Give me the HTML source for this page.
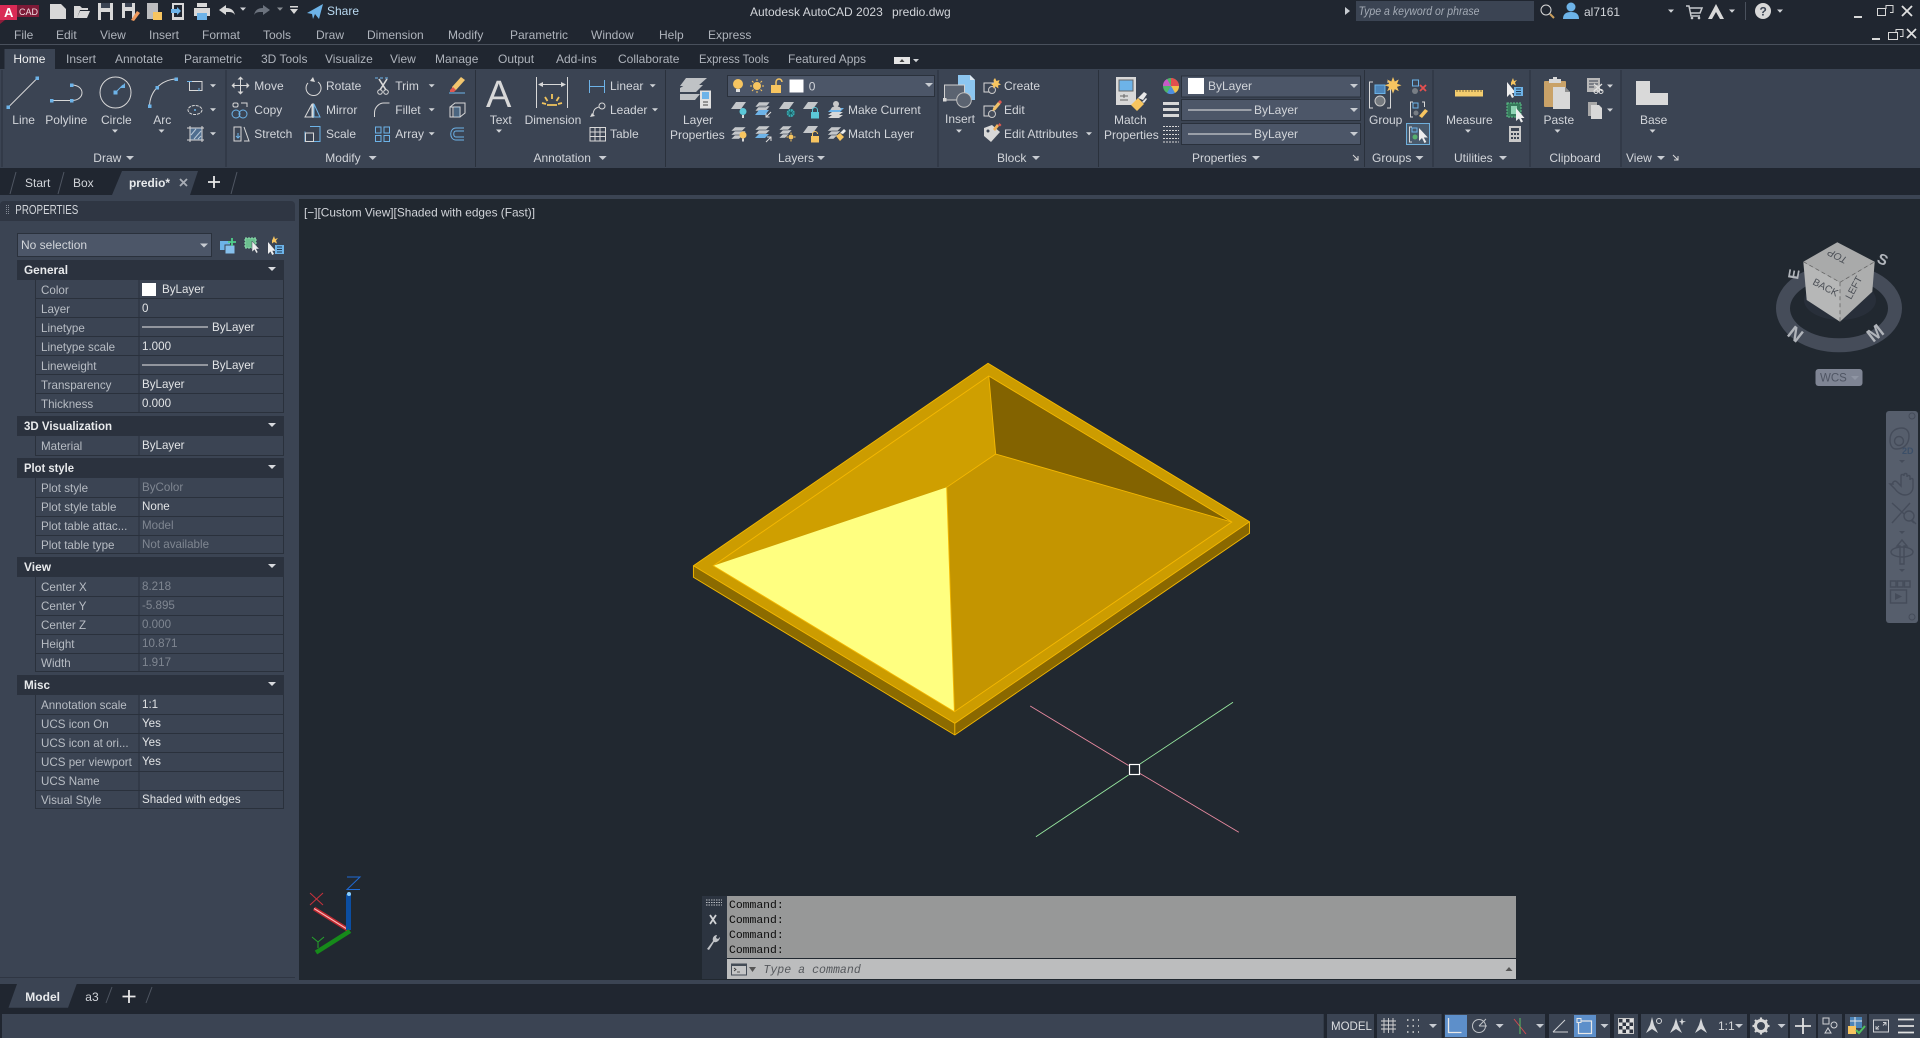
<!DOCTYPE html>
<html><head><meta charset="utf-8"><title>Autodesk AutoCAD 2023 predio.dwg</title>
<style>
html,body{margin:0;padding:0;background:#212830;width:1920px;height:1038px;overflow:hidden}
svg{display:block;font-family:"Liberation Sans",sans-serif;font-size:12px}
.t{fill:#d2d5da}.m{fill:#afb4bc}.l{fill:#b8bdc4;font-size:11.6px}.v{fill:#e2e4e6;font-size:11.6px}.d{fill:#7f8691;font-size:11.6px}
.h{fill:#e8eaec;font-weight:bold}
.c{font-family:"Liberation Mono",monospace;font-size:11.4px;fill:#0c0c0c}
.s{fill:none;stroke:#d8d8d8;stroke-width:1}.b{fill:#6db3e8}.g{fill:#d8d8d8}.y{fill:#f7c560}
.bs{fill:none;stroke:#6db3e8;stroke-width:1}
.n{fill:none;stroke:#454c5a;stroke-width:1.4}
</style></head><body>
<svg width="1920" height="1038" viewBox="0 0 1920 1038" xmlns="http://www.w3.org/2000/svg">
<defs><path id="tr" d="M-3-1.5h6l-3 3.2z" fill="#d0d3d7"/><path id="trb" d="M-4-2h8l-4 4z" fill="#c8ccd2"/></defs>
<!-- base -->
<rect width="1920" height="69" fill="#202630"/>
<rect y="44" width="1920" height="1" fill="#49505c"/>
<rect y="69" width="1920" height="99" fill="#3b4453"/>
<rect y="168" width="1920" height="27" fill="#202630"/>
<rect y="195" width="1920" height="4" fill="#3b4453"/>
<rect x="299" y="199" width="1621" height="781" fill="#212830"/>
<rect y="199" width="299" height="781" fill="#3b4453"/>
<rect y="980" width="1920" height="4" fill="#3b4453"/>
<rect y="984" width="1920" height="54" fill="#202630"/>
<rect x="2" y="1014" width="1918" height="24" fill="#3b4453"/>

<!-- title bar -->
<rect x="0" y="5" width="17" height="15" fill="#d92a55"/><path d="M0 20h5l-5 4z" fill="#8e1c3a"/>
<rect x="17" y="5" width="22" height="12" fill="#7d1a37"/>
<text x="4" y="17" fill="#fff" font-weight="bold" font-size="13">A</text>
<text x="19" y="15" fill="#f2dfe4" font-size="9">CAD</text>
<!-- QAT -->
<path d="M50 4h11l5 5v10H50z" class="g"/>
<path d="M74 18V6h6l2 2h6v2h-8l-3 8zM77 18l3-7h10l-3 7z" class="g"/>
<path d="M98 3h15v17H98z" class="g"/><rect x="101" y="3" width="9" height="5" fill="#3b4453"/><rect x="101" y="12" width="9" height="8" fill="#202630"/>
<path d="M122 3h13v15h-13z" class="g"/><rect x="125" y="3" width="7" height="4" fill="#3b4453"/><rect x="125" y="11" width="7" height="7" fill="#202630"/><path d="M131 20l6-9 3 2-6 8z" fill="#f09a5c"/>
<path d="M147 3h11v16h-11z" class="g" opacity=".85"/><rect x="153" y="12" width="9" height="8" class="y"/>
<path d="M172 3h12v17h-12z" class="g"/><rect x="174" y="5" width="8" height="12" fill="#202630"/><path d="M171 9h6v-2l4 4-4 4v-2h-6z" class="b"/>
<rect x="197" y="3" width="10" height="4" class="g"/><rect x="194" y="8" width="16" height="8" class="g"/><rect x="197" y="13" width="10" height="7" class="b"/>
<path d="M219 10l7-5v3c6 0 8 3 9 7-2-3-4-3-9-3v3z" class="g"/>
<use href="#tr" x="243" y="9"/>
<path d="M270 10l-7-5v3c-6 0-8 3-9 7 2-3 4-3 9-3v3z" fill="#6b727d"/>
<use href="#tr" x="280" y="9" opacity=".6"/>
<path d="M290 6h8v1.5h-8z M290 9h8l-4 5z" class="g"/>
<path d="M307 13l16-9-4 15-4-5-2 5-1-5z" class="b"/>
<text x="327" y="15" fill="#b9d9f1">Share</text>
<text x="750" y="16" class="t">Autodesk AutoCAD 2023</text>
<text x="892" y="16" class="t">predio.dwg</text>
<path d="M1345 7l5 4-5 4z" fill="#c8ccd2"/>
<rect x="1356" y="1" width="178" height="20" fill="#3b4453"/>
<text x="1358.5" y="15" fill="#a4abb6" font-style="italic" font-size="11.5" textLength="121" lengthAdjust="spacingAndGlyphs">Type a keyword or phrase</text>
<circle cx="1546" cy="10" r="5" fill="none" stroke="#d8d8d8"/><path d="M1550 14l4 4" stroke="#c99e5c" stroke-width="2"/>
<circle cx="1571" cy="7" r="4.5" class="b"/><path d="M1563 19c0-5 3-7 8-7s8 2 8 7z" class="b"/>
<text x="1584" y="16" class="t">al7161</text><use href="#tr" x="1671" y="11"/>
<path d="M1686 6h3l2 10h9M1690 8h12l-2 5h-9" fill="none" stroke="#c6c9cd" stroke-width="1.5"/><circle cx="1692" cy="18" r="1.3" fill="#c6c9cd"/><circle cx="1699" cy="18" r="1.3" fill="#c6c9cd"/>
<path d="M1716 4l8 15h-4l-4-7-4 7h-4z" class="g"/><use href="#tr" x="1732" y="11"/>
<rect x="1745" y="2" width="1" height="18" fill="#4a515d"/>
<circle cx="1763" cy="11" r="8" class="g"/><text x="1759.5" y="15.5" fill="#3b4453" font-weight="bold">?</text><use href="#tr" x="1780" y="11"/>
<rect x="1854" y="16" width="8" height="2" class="g"/>
<path d="M1878 8.500h8v-3h7v7h-3M1877.500 8.500h8v7h-8z" class="s" stroke-width="1.4"/>
<path d="M1902 6l10 10M1912 6l-10 10" stroke="#e0e0e0" stroke-width="1.8"/>

<!-- menu -->
<g class="m">
<text x="14" y="39">File</text><text x="56" y="39">Edit</text><text x="100" y="39">View</text><text x="149" y="39">Insert</text><text x="202" y="39">Format</text><text x="263" y="39">Tools</text><text x="316" y="39">Draw</text><text x="367" y="39">Dimension</text><text x="448" y="39">Modify</text><text x="510" y="39">Parametric</text><text x="591" y="39">Window</text><text x="659" y="39">Help</text><text x="708" y="39">Express</text>
</g>
<rect x="1872" y="38" width="8" height="2" class="g"/><path d="M1889 32.500h7v-3h7v7h-3M1888.500 32.500h9v7h-9z" class="s" stroke-width="1.3"/><path d="M1907 29l9 9M1916 29l-9 9" stroke="#e0e0e0" stroke-width="1.7"/>

<!-- tabs -->
<rect x="4.500" y="49" width="50.500" height="20" fill="#3b4453"/>
<text x="13.400" y="63" fill="#f0f1f2">Home</text>
<g class="m">
<text x="66" y="63">Insert</text><text x="115" y="63">Annotate</text><text x="184" y="63">Parametric</text><text x="261" y="63">3D Tools</text><text x="325" y="63">Visualize</text><text x="390" y="63">View</text><text x="435" y="63">Manage</text><text x="498" y="63">Output</text><text x="556" y="63">Add-ins</text><text x="618" y="63">Collaborate</text><text x="699" y="63" textLength="70" lengthAdjust="spacingAndGlyphs">Express Tools</text><text x="788" y="63">Featured Apps</text>
</g>
<rect x="894" y="57" width="16" height="7" fill="#e4e4e4"/><path d="M899.500 62l2.500-3 2.500 3z" fill="#444"/><use href="#tr" x="916" y="60.500"/>

<!-- ribbon separators -->
<g fill="#2a313c">
<rect x="1.500" y="70" width="1" height="97"/><rect x="225.500" y="70" width="1" height="97"/><rect x="475" y="70" width="1" height="97"/><rect x="665" y="70" width="1" height="97"/><rect x="937.500" y="70" width="1" height="97"/><rect x="1098" y="70" width="1" height="97"/><rect x="1364" y="70" width="1" height="97"/><rect x="1432.500" y="70" width="1" height="97"/><rect x="1529.500" y="70" width="1" height="97"/><rect x="1620.500" y="70" width="1" height="97"/>
</g>

<!-- Draw -->
<path d="M8.500 107L37 78.500" class="s"/><rect x="6.500" y="105.500" width="3.500" height="3.500" class="b"/><rect x="35.500" y="76.500" width="3.500" height="3.500" class="b"/>
<path d="M52 100.500h19.500M71.500 85c14 0 14 15.500 0 15.500" class="s" stroke-width="1.2"/><rect x="50" y="99" width="3.500" height="3.500" class="b"/><rect x="70" y="99" width="3.500" height="3.500" class="b"/><rect x="70" y="83.500" width="3.500" height="3.500" class="b"/>
<circle cx="115.500" cy="92.500" r="15.500" class="s" stroke-width="1.2"/><path d="M115.500 92.500L123 85" stroke="#6db3e8"/><path d="M125 83v5h-5z" class="b"/><rect x="113.500" y="90.500" width="4" height="4" class="b"/>
<path d="M149.500 106C150 92 160 80 176 79" class="s" stroke-width="1.2"/><rect x="148" y="104.500" width="3.500" height="3.500" class="b"/><rect x="155.500" y="86" width="3.500" height="3.500" class="b"/><rect x="174.500" y="77.500" width="3.500" height="3.500" class="b"/>
<path d="M189.500 81.500h12.500v9h-12.500z" class="s"/><path d="M187 81.500h5M199 91v-3" class="bs"/>
<ellipse cx="195" cy="110" rx="7" ry="4.500" class="s" stroke-dasharray="3 1"/><circle cx="195" cy="110" r="1" class="b"/>
<path d="M190 128h12v12h-12z" fill="#4f6e90" stroke="#d8d8d8"/><path d="M191 135l5-6M194 139l7-8M198 139l3-3" stroke="#b8c8d8"/><path d="M187 128h17M187 140h17M190 126v16M202 126v16" class="s" stroke-width=".8"/>
<use href="#tr" x="213" y="85.700"/><use href="#tr" x="213" y="109.700"/><use href="#tr" x="213" y="133.700"/><use href="#tr" x="115" y="131"/><use href="#tr" x="161.500" y="131"/>
<g class="t">
<text x="12.300" y="124">Line</text><text x="45.300" y="124">Polyline</text><text x="101" y="124">Circle</text><text x="153.300" y="124">Arc</text>
<text x="93.300" y="162">Draw</text>
<text x="254.300" y="90">Move</text><text x="254.300" y="114">Copy</text><text x="254.300" y="138">Stretch</text>
<text x="326" y="90">Rotate</text><text x="326" y="114">Mirror</text><text x="326" y="138">Scale</text>
<text x="395.300" y="90">Trim</text><text x="395.300" y="114">Fillet</text><text x="395.300" y="138">Array</text>
<text x="325.300" y="162">Modify</text>
<text x="489.700" y="124">Text</text><text x="524.600" y="124">Dimension</text>
<text x="610" y="90">Linear</text><text x="610" y="114">Leader</text><text x="610" y="138">Table</text>
<text x="533.500" y="162">Annotation</text>
<text x="683" y="124">Layer</text><text x="670" y="139">Properties</text>
<text x="848" y="114">Make Current</text><text x="848" y="138">Match Layer</text><text x="778" y="162">Layers</text>
<text x="945" y="123">Insert</text><text x="1004" y="90">Create</text><text x="1004" y="114">Edit</text><text x="1004" y="138">Edit Attributes</text><text x="997" y="162">Block</text>
<text x="1114" y="124">Match</text><text x="1104" y="139">Properties</text><text x="1192" y="162">Properties</text>
<text x="1369" y="124">Group</text><text x="1372" y="162">Groups</text>
<text x="1446" y="124">Measure</text><text x="1454" y="162">Utilities</text>
<text x="1543.500" y="124">Paste</text><text x="1549.400" y="162">Clipboard</text>
<text x="1640" y="124">Base</text><text x="1626" y="162">View</text>
</g>
<use href="#trb" x="130" y="158"/><use href="#trb" x="372.700" y="158"/><use href="#trb" x="602.700" y="158"/><use href="#trb" x="821" y="158"/><use href="#trb" x="1036" y="158"/><use href="#trb" x="1256" y="158"/><use href="#trb" x="1419.500" y="158"/><use href="#trb" x="1503" y="158"/><use href="#trb" x="1661" y="158"/>
<path d="M1353 155l5 5M1358 156v4h-4" class="s" stroke-width=".8"/><path d="M1673 155l5 5M1678 156v4h-4" class="s" stroke-width=".8"/>

<!-- Modify icons -->
<path d="M240.500 78v15M233 85.500h15" class="s" stroke-width="1.5"/><path d="M240.500 76.500l3 3h-6zM240.500 94.500l3-3h-6zM231.500 85.500l3-3v6zM249.500 85.500l-3-3v6z" class="g"/>
<circle cx="236" cy="114" r="4" class="bs"/><circle cx="243" cy="114" r="4" class="bs"/><rect x="233" y="103" width="5" height="4" class="s" rx="1.500"/><path d="M241 103h6v4" class="s"/>
<path d="M234 127h7v14h-7zM244 127l5 14h-5" class="s"/><path d="M238 133v5M236 136l2 2 2-2" class="bs"/>
<path d="M318 82a7.500 7.500 0 1 1-10 1" class="s" stroke-width="1.2"/><path d="M313 77l-3 4 5 1z" class="g"/>
<path d="M312 104v13h-7z" class="s"/><path d="M314 104v13h6z" class="bs"/><path d="M313 103v15" class="s" stroke-width=".7"/>
<path d="M310 126.500h10v15h-15v-10" class="bs"/><path d="M305.500 133h8v8.500h-8z" class="s"/>
<path d="M375 78h3M380 78h3M385 78h3" stroke="#6db3e8"/><path d="M379 79l7 11M387 79l-7 11" stroke="#d8d8d8" stroke-width="1.6"/><circle cx="380" cy="92" r="2.300" class="s"/><circle cx="386" cy="92" r="2.300" class="s"/>
<path d="M374.500 117v-4c0-6 5-10 9-10h6" class="s"/>
<path d="M375.500 127h5.500v6h-5.500zM384 127h5.500v6H384zM375.500 135.500h5.500v6h-5.500zM384 135.500h5.500v6H384z" class="bs"/>
<use href="#tr" x="431.700" y="85.700"/><use href="#tr" x="431.700" y="109.700"/><use href="#tr" x="431.700" y="133.700"/>
<path d="M452 87l9-10 4 3-9 10-4 1z" fill="#f2c66e"/><path d="M450 90l3-3 3 3-2 2h-4z" fill="#e0584f"/><path d="M449 93h16" class="bs"/>
<path d="M450 107h10v10h-10zM450 107l5-4h10v10l-5 4M453 107v10" class="s"/><rect x="454" y="107" width="6" height="10" fill="#6db3e8" opacity=".3"/>
<path d="M464 128h-8c-7 0-7 12 0 12h8M464 131h-8c-3 0-3 6 0 6h8" class="bs" stroke-width="1.200"/>

<!-- Annotation -->
<text x="486" y="107" class="g" font-size="38" font-weight="normal">A</text><use href="#tr" x="499" y="131"/>
<path d="M536.500 77v31M567.500 77v31M539 84.500h26" class="s"/><path d="M538 84.500l5-2.500v5zM566 84.500l-5-2.500v5z" class="g"/>
<path d="M552 94v5M545 97l2.500 4M559 97l-2.500 4M542 103l4 1M562 103l-4 1M547 105h10" stroke="#f2c55e" stroke-width="1.800" fill="none"/>
<path d="M589.500 80v13M604.500 80v13M590 86.500h14" class="bs"/>
<circle cx="602" cy="106" r="3" class="s"/><path d="M599 107c-4 1-6 3-6 9" class="s"/><path d="M590 117l5-1-3-3z" class="g"/>
<path d="M590 127.500h15.500v13.500H590zM590 132h15.500M590 136.500h15.500M595 127.500V141M600 127.500V141" class="s"/>
<use href="#tr" x="652.700" y="85.700"/><use href="#tr" x="655" y="109.700"/>

<!-- Layers -->
<path d="M686 78h21l-9 8h-18zM680 88l5-3h18l-7 7h-16zM680 94h20l-5 6h-15z" fill="#bfc2c5"/>
<rect x="700" y="90.500" width="11" height="18" fill="#e0e0e0"/><rect x="702" y="92" width="7" height="7" class="b"/><path d="M703 102h5M703 105h5" stroke="#444"/>
<rect x="727.500" y="75.500" width="207" height="21" fill="#4c5668" stroke="#2a313c"/>
<circle cx="738" cy="84" r="5" class="y"/><rect x="736" y="89" width="4" height="3" fill="#e0e0e0"/>
<circle cx="757" cy="86" r="4" class="y"/><path d="M757 79v2M757 91v2M750 86h2M762 86h2M752 81l1.500 1.500M762 81l-1.500 1.500M752 91l1.500-1.500M762 91l-1.500-1.500" stroke="#f7c560"/>
<rect x="771" y="85" width="10" height="8" class="y"/><path d="M776 85v-3a3 3 0 0 1 6 0" fill="none" stroke="#f7c560" stroke-width="1.500"/>
<rect x="789.500" y="79.500" width="14" height="13" fill="#fff"/>
<text x="808.700" y="90.500" class="t">0</text><use href="#trb" x="929" y="85"/>
<!-- row 2 -->
<path d="M731 109l5-7h10l-5 7z" fill="#c4c7ca"/><circle cx="743" cy="111.500" r="3.500" fill="#5bc8d8"/><rect x="742" y="115" width="2" height="3" fill="#d8d8d8"/>
<path d="M755 107l4-5h11l-4 5zM755 111l4-5h11l-4 5z" fill="#c4c7ca" stroke="#3b4453" stroke-width=".5"/><path d="M755 115l4-5h10l-4 5z" class="b"/><path d="M771 112l-5 5M766 113.500v3.500h3.500" stroke="#ddd" fill="none"/>
<path d="M779 109l5-7h10l-5 7z" fill="#c4c7ca"/><circle cx="790.700" cy="113" r="4" fill="#3ab0b8"/><path d="M786 113h9.500M790.700 108.500v9M787.500 110l6.500 6M794 110l-6.500 6" stroke="#1f5a60" stroke-width=".7"/>
<path d="M803 109l5-7h10l-5 7z" fill="#c4c7ca"/><rect x="811" y="112" width="8" height="6.500" fill="#5bc8d8"/><path d="M812.500 112v-2a2.500 2.500 0 0 1 5 0v2" fill="none" stroke="#5bc8d8"/>
<path d="M828 112l4-4h12l-4 4z" class="b"/><path d="M828 115l4-3h11l-4 3zM828 118l4-3h11l-4 3z" fill="#d8d8d8"/><circle cx="836" cy="104" r="3" fill="#c8c8c8"/><path d="M831 110c0-3 2-3.500 5-3.500s5 .5 5 3.500z" fill="#c8c8c8"/>
<!-- row 3 -->
<path d="M731 131l4-4h11l-4 4zM731 135l4-4h11l-4 4zM731 139l4-4h8l-4 4z" fill="#c4c7ca" stroke="#3b4453" stroke-width=".4"/><circle cx="743" cy="135" r="3.500" class="y"/><rect x="742" y="138.500" width="2" height="3" fill="#d8d8d8"/>
<path d="M755 130l4-4h11l-4 4zM755 134l4-4h11l-4 4z" fill="#c4c7ca" stroke="#3b4453" stroke-width=".4"/><path d="M755 138l4-4h10l-4 4z" class="b"/><path d="M766 142l5-5M767 137h4v4" stroke="#ddd" fill="none"/>
<path d="M779 130l4-4h9l-4 4zM779 134l4-4h9l-4 4zM779 138l4-4h6l-4 4z" fill="#c4c7ca" stroke="#3b4453" stroke-width=".4"/><circle cx="791" cy="137" r="2.500" class="y"/><path d="M791 132.500v1.500M791 140v1.500M786.500 137h1.500M794 137h1.500" stroke="#f7c560"/>
<path d="M803 133l5-7h10l-5 7z" fill="#c4c7ca"/><rect x="811" y="136" width="8" height="6.500" class="y"/><path d="M812.500 136v-2a2.500 2.500 0 0 1 5 0" fill="none" stroke="#f7c560"/>
<path d="M827.500 131l4-4h10l-4 4zM827.500 135l4-4h9l-4 4zM827.500 139l4-4h6l-4 4z" fill="#c4c7ca" stroke="#3b4453" stroke-width=".4"/><path d="M836 136l4 5 4-4-4-4z" class="y"/><path d="M840 133l4-4 2 2-3 3z" fill="#eee"/>

<!-- Block -->
<path d="M958 75h12l5 5v20h-17z" fill="#8cc6f0"/><path d="M970 75l5 5h-5z" fill="#e0eaf2"/>
<rect x="944.500" y="85" width="20" height="15" fill="#5b6370" stroke="#d0d0d0"/><circle cx="964" cy="100" r="7.300" fill="#5b6370" stroke="#c0c0c0"/><rect x="943" y="98" width="3.500" height="3.500" class="g"/>
<use href="#tr" x="959" y="131"/>
<path d="M984 83h10v9h-10z" class="s"/><circle cx="992" cy="90" r="3.500" fill="#444c5a" stroke="#c8c8c8"/><path d="M995 78l1.500 3 3-1-1 3 2.500 1.500-3 1 .5 3-3-2-2 2-.5-3-2-1.500 3-1-.5-3z" class="y"/>
<path d="M984 106h10v10h-10z" class="s"/><circle cx="992" cy="114" r="3.500" fill="#444c5a" stroke="#c8c8c8"/><path d="M993 108l5-6 2.500 2-5 6-3 1z" fill="#f0c06a"/><path d="M998 102l2-2 2 2-1.500 2z" fill="#e0584f"/>
<path d="M984 128l8-3 8 7-9 10-7-6z" class="g"/><circle cx="988" cy="131" r="1.500" fill="#3b4453"/><path d="M993 129l4-5 2 2-4 5z" fill="#f0b05a"/><path d="M998 125l1.500-2 2 2-1.500 1.500z" fill="#e0584f"/>
<use href="#tr" x="1089" y="133.700"/>

<!-- Match props -->
<rect x="1116" y="77" width="20" height="28" fill="#d8d8d8"/><rect x="1119" y="80" width="14" height="11" class="b" stroke="#666"/><path d="M1120 96h8M1120 100h8M1124 94v4" stroke="#666"/>
<path d="M1131 105l7-7 6 6-7 7z" class="y"/><path d="M1138 98l6-6 3 2-4 6z" fill="#e8e8e8"/><path d="M1142 102l4-4 1 1-3 4z" fill="#e8e8e8"/>
<circle cx="1171" cy="86" r="8" fill="#4eb56a"/><path d="M1171 86v-8a8 8 0 0 1 8 8z" fill="#e24f4f"/><path d="M1171 86h8a8 8 0 0 1-4 7z" fill="#f2c24d"/><path d="M1171 86l-4 7a8 8 0 0 0 8 0z" fill="#4f8ee0"/><path d="M1171 86l-8 0a8 8 0 0 1 4-7l4 7z" fill="#c85ac8"/>
<path d="M1163 102h16v3h-16zM1163 108h16v3h-16zM1163 114h16v3h-16z" class="g"/>
<path d="M1163 126.500h16M1163 130.500h16M1163 134.500h16M1163 138.500h16M1163 142h16" stroke="#d8d8d8" stroke-dasharray="2 1"/>
<rect x="1181.500" y="76" width="179" height="21" fill="#4c5668" stroke="#2a313c"/>
<rect x="1181.500" y="99.500" width="179" height="21" fill="#4c5668" stroke="#2a313c"/>
<rect x="1181.500" y="123.500" width="179" height="21" fill="#4c5668" stroke="#2a313c"/>
<rect x="1188" y="78" width="16" height="16" fill="#fff"/><text x="1208" y="90" class="t">ByLayer</text>
<path d="M1188 110h63.500M1188 134h63.500" stroke="#e8e8e8"/><text x="1254" y="114" class="t">ByLayer</text><text x="1254" y="138" class="t">ByLayer</text>
<use href="#trb" x="1354" y="86"/><use href="#trb" x="1354" y="110"/><use href="#trb" x="1354" y="134"/>

<!-- Groups -->
<path d="M1373 82h-3.500v26h3.500M1387 82h3.500v26h-3.500" class="s" stroke-width="1.300"/>
<rect x="1375" y="85" width="10" height="8.500" fill="#4c84b8" stroke="#6db3e8"/><circle cx="1380" cy="101" r="5" fill="#74797f" stroke="#c8c8c8"/>
<path d="M1393 77l1.800 4.500 4-2-1.800 4.200 4.500 1.500-4.500 1.700 1.800 4.200-4-2-1.800 4.500-1.700-4.500-4.200 2 2-4.200-4.500-1.700 4.500-1.500-2-4.200 4.200 2z" class="y"/>
<rect x="1412.500" y="80" width="6" height="6" fill="none" stroke="#6db3e8"/><circle cx="1415" cy="91" r="3" fill="#787e85"/><path d="M1420 85l6 6M1426 85l-6 6" stroke="#e55050" stroke-width="1.800"/>
<path d="M1413 102h-2.500v15h2.500M1422 102h2.500v5" class="s"/><rect x="1413" y="103" width="5" height="5" class="bs"/><circle cx="1416" cy="113" r="2.500" fill="#787e85"/><path d="M1419 116l6-7 3 2-6 7z" class="y"/>
<rect x="1406.500" y="123.500" width="23" height="21" fill="#495a6c" stroke="#6fb0dc"/>
<path d="M1412 127h-2.500v15h2.500" class="s"/><rect x="1412" y="128" width="5" height="4" fill="none" stroke="#6db3e8"/><circle cx="1415" cy="137" r="2.500" fill="#57b06f"/><path d="M1419 128v13l3-3 2.500 5 1.800-1-2.500-4.500h4z" fill="#eee"/>

<!-- Utilities -->
<rect x="1455" y="90" width="28" height="6.500" fill="#f4cd6e"/><path d="M1457 90v2M1460 90v2M1463 90v2M1466 90v2M1469 90v2M1472 90v2M1475 90v2M1478 90v2M1481 90v2" stroke="#7a6838"/>
<path d="M1507 82v15l3-3 2 4 2-1-2-4h4z" fill="#eee"/><rect x="1514" y="87" width="9" height="9" class="b"/><path d="M1516 89h5M1516 91.500h5M1516 94h5" stroke="#1f3a52"/><path d="M1513 78l1 3 3-1-2 2.500 1 3-3-1.500-2 1.500v-3z" class="y"/>
<rect x="1507" y="103" width="14" height="14" fill="#377a5c" stroke="#5cc48a" stroke-dasharray="2 1"/><rect x="1511" y="106" width="6" height="8" fill="#8fd4b4"/><path d="M1516 108v13l3-2.500 2 4 2-1-2-3.500h3.500z" fill="#eee"/>
<rect x="1509" y="126" width="12" height="16" fill="#c8c8c8"/><rect x="1511" y="128" width="8" height="3" fill="#3b4453"/><path d="M1511 133h2v2h-2zM1514 133h2v2h-2zM1517 133h2v2h-2zM1511 137h2v2h-2zM1514 137h2v2h-2zM1517 137h2v2h-2z" fill="#3b4453"/>
<use href="#tr" x="1468" y="131"/>

<!-- Clipboard -->
<rect x="1544" y="81" width="22" height="26" fill="#c9a268" rx="1"/><rect x="1549" y="79" width="12" height="4" class="g"/><rect x="1553" y="77" width="4" height="3" class="g"/>
<path d="M1553 87h12l5 5v17h-17z" class="g"/><path d="M1565 87l5 5h-5z" fill="#8f8f8f"/>
<use href="#tr" x="1557.500" y="131"/>
<rect x="1587" y="78" width="13" height="14" fill="#b8b8b8"/><path d="M1589 81h9M1589 84h9M1589 87h5" stroke="#3b4453"/><path d="M1594 84l8 7M1602 84l-8 7" stroke="#e0e0e0" stroke-width="1.300"/><circle cx="1596" cy="91.500" r="2" fill="none" stroke="#e0e0e0"/><circle cx="1601" cy="91.500" r="2" fill="none" stroke="#e0e0e0"/>
<path d="M1588 102h9v14h-9z" fill="#a8a8a8"/><path d="M1591 105h8l3 3v11h-11z" class="g"/><use href="#tr" x="1610" y="86"/><use href="#tr" x="1610" y="110"/>

<!-- View -->
<path d="M1636 81h14v12h18v12h-32z" fill="#d9d9d9"/><use href="#tr" x="1652.500" y="131"/>

<!-- doc tabs -->
<path d="M112 195l10-24h76l-8 24z" fill="#3b4453"/>
<path d="M10 194l6-22M58 194l6-22M231 194l6-22" stroke="#4f5662"/>
<text x="25" y="187" class="t">Start</text><text x="73" y="187" class="t">Box</text>
<text x="129" y="187" fill="#e8eaec" font-weight="bold" textLength="41" lengthAdjust="spacingAndGlyphs">predio*</text>
<path d="M180 179l7 7M187 179l-7 7" stroke="#a8adb5" stroke-width="1.800"/>
<path d="M214 176v12M208 182h12" stroke="#e8e8e8" stroke-width="1.800"/>

<!-- properties panel -->
<path d="M0 221v-16a4 4 0 0 1 4-4h287a4 4 0 0 1 4 4v16z" fill="#2f3643"/>
<path d="M6.500 205v10M8.500 205v10" stroke="#838a95" stroke-dasharray="1 1"/>
<text x="15.300" y="214" fill="#d2d5da" font-size="13" textLength="63" lengthAdjust="spacingAndGlyphs">PROPERTIES</text>
<rect x="17.500" y="233.500" width="194" height="23" fill="#4c5668" stroke="#2a313c"/>
<text x="21" y="249" class="t">No selection</text><use href="#trb" x="204" y="245.500"/>
<rect x="220" y="241" width="10" height="9" class="b"/><rect x="225" y="245" width="10" height="9" fill="#86c0ec" stroke="#3b4453"/><path d="M232 238v8M228 242h8" stroke="#4fd08a" stroke-width="1.800"/>
<rect x="245" y="238" width="11" height="10" fill="#6cc090" stroke="#8fe0b0" stroke-dasharray="2 1"/><path d="M252 241v11l2.500-2.300 1.700 3.500 1.800-.9-1.700-3.300h3z" fill="#eee" stroke="#3b4453" stroke-width=".5"/>
<path d="M268 242v12l2.500-2.500 1.700 3.500 1.800-1-1.700-3.300h3.200z" fill="#eee"/><rect x="275" y="245" width="9" height="9" class="b"/><path d="M277 247h5M277 249.500h5M277 252h5" stroke="#1f3a52"/><path d="M274 236l1 3 3-1-2 2.500 1 3-3-1.500-2 1.500v-3z" class="y"/>

<g fill="#2b323e">
<rect x="17" y="260" width="267" height="20"/><rect x="17" y="416" width="267" height="20"/><rect x="17" y="458" width="267" height="20"/><rect x="17" y="557" width="267" height="20"/><rect x="17" y="675" width="267" height="20"/>
</g>
<g fill="#2a313c">
<rect x="35" y="280" width="1" height="133"/><rect x="138.500" y="280" width="1" height="133"/><rect x="283" y="280" width="1" height="133"/>
<rect x="35" y="436" width="1" height="19"/><rect x="138.500" y="436" width="1" height="19"/><rect x="283" y="436" width="1" height="19"/>
<rect x="35" y="478" width="1" height="76"/><rect x="138.500" y="478" width="1" height="76"/><rect x="283" y="478" width="1" height="76"/>
<rect x="35" y="577" width="1" height="95"/><rect x="138.500" y="577" width="1" height="95"/><rect x="283" y="577" width="1" height="95"/>
<rect x="35" y="695" width="1" height="114"/><rect x="138.500" y="695" width="1" height="114"/><rect x="283" y="695" width="1" height="114"/>
<rect x="35" y="298" width="249" height="1"/><rect x="35" y="317" width="249" height="1"/><rect x="35" y="336" width="249" height="1"/><rect x="35" y="355" width="249" height="1"/><rect x="35" y="374" width="249" height="1"/><rect x="35" y="393" width="249" height="1"/><rect x="35" y="412" width="249" height="1"/><rect x="35" y="455" width="249" height="1"/>
<rect x="35" y="497" width="249" height="1"/><rect x="35" y="516" width="249" height="1"/><rect x="35" y="535" width="249" height="1"/><rect x="35" y="553" width="249" height="1"/>
<rect x="35" y="596" width="249" height="1"/><rect x="35" y="615" width="249" height="1"/><rect x="35" y="634" width="249" height="1"/><rect x="35" y="653" width="249" height="1"/><rect x="35" y="671" width="249" height="1"/>
<rect x="35" y="714" width="249" height="1"/><rect x="35" y="733" width="249" height="1"/><rect x="35" y="752" width="249" height="1"/><rect x="35" y="771" width="249" height="1"/><rect x="35" y="790" width="249" height="1"/><rect x="35" y="808" width="249" height="1"/>
</g>
<rect x="0" y="977" width="295" height="1" fill="#2f3643"/>
<text x="24" y="274" class="h" textLength="44" lengthAdjust="spacingAndGlyphs">General</text><text x="24" y="430" class="h" textLength="88" lengthAdjust="spacingAndGlyphs">3D Visualization</text><text x="24" y="472" class="h" textLength="50" lengthAdjust="spacingAndGlyphs">Plot style</text><text x="24" y="571" class="h" textLength="27" lengthAdjust="spacingAndGlyphs">View</text><text x="24" y="689" class="h" textLength="26" lengthAdjust="spacingAndGlyphs">Misc</text>
<path d="M268 267h8l-4 4zM268 423h8l-4 4zM268 465h8l-4 4zM268 564h8l-4 4zM268 682h8l-4 4z" fill="#d8dade"/>
<rect x="142" y="283" width="14" height="13" fill="#fff"/>
<path d="M142 327h66M142 365h66" stroke="#e8e8e8"/>
<g class="l">
<text x="41" y="294">Color</text><text x="41" y="313">Layer</text><text x="41" y="332">Linetype</text><text x="41" y="351">Linetype scale</text><text x="41" y="370">Lineweight</text><text x="41" y="389">Transparency</text><text x="41" y="408">Thickness</text>
<text x="41" y="450">Material</text>
<text x="41" y="492">Plot style</text><text x="41" y="511">Plot style table</text><text x="41" y="530">Plot table attac...</text><text x="41" y="549">Plot table type</text>
<text x="41" y="591">Center X</text><text x="41" y="610">Center Y</text><text x="41" y="629">Center Z</text><text x="41" y="648">Height</text><text x="41" y="667">Width</text>
<text x="41" y="709">Annotation scale</text><text x="41" y="728">UCS icon On</text><text x="41" y="747">UCS icon at ori...</text><text x="41" y="766">UCS per viewport</text><text x="41" y="785">UCS Name</text><text x="41" y="804">Visual Style</text>
</g>
<g class="v">
<text x="162" y="293">ByLayer</text><text x="142" y="312">0</text><text x="212" y="331">ByLayer</text><text x="142" y="350">1.000</text><text x="212" y="369">ByLayer</text><text x="142" y="388">ByLayer</text><text x="142" y="407">0.000</text>
<text x="142" y="449">ByLayer</text><text x="142" y="510">None</text>
<text x="142" y="708">1:1</text><text x="142" y="727">Yes</text><text x="142" y="746">Yes</text><text x="142" y="765">Yes</text><text x="142" y="803">Shaded with edges</text>
</g>
<g class="d">
<text x="142" y="491">ByColor</text><text x="142" y="529">Model</text><text x="142" y="548">Not available</text>
<text x="142" y="590">8.218</text><text x="142" y="609">-5.895</text><text x="142" y="628">0.000</text><text x="142" y="647">10.871</text><text x="142" y="666">1.917</text>
</g>

<!-- viewport label -->
<text x="304" y="216.500" fill="#d2d5da" textLength="231" lengthAdjust="spacingAndGlyphs">[−][Custom View][Shaded with edges (Fast)]</text>

<!-- model -->
<g stroke-linejoin="miter">
<path d="M693.400 565.700L954.800 723.300V735L693.400 577.300z" fill="#8c6b00"/>
<path d="M1249.500 521.700L954.800 723.300V735L1249.500 533.300z" fill="#8a6800"/>
<path d="M988 363.300L1249.500 521.700 954.800 723.300 693.400 565.700z" fill="#cc9c00"/>
<path d="M988.800 376L713.300 565.700 946.700 487.300 995.700 454z" fill="#cf9f00"/>
<path d="M988.800 376L1231.800 522 995.700 454z" fill="#836300"/>
<path d="M995.700 454L1231.800 522 954.400 711.700 946.700 487.300z" fill="#c49500"/>
<path d="M946.700 487.300L713.300 565.700 954.400 711.700z" fill="#ffff80"/>
<g fill="none" stroke="#f5b800" stroke-width=".9">
<path d="M988 363.300L1249.500 521.700V533.300L954.800 735 693.400 577.300V565.700z"/>
<path d="M693.400 565.700L954.800 723.300 1249.500 521.700M954.800 723.300V735"/>
<path d="M988.800 376L1231.800 522 954.400 711.700 713.300 565.700z"/>
<path d="M988.800 376L995.700 454 1231.800 522M995.700 454L946.700 487.300 954.400 711.700"/>
</g>
</g>
<path d="M1030.200 706L1128.500 765.500M1140 773.500L1238.800 832.300" stroke="#e88aa0" stroke-width=".9"/>
<path d="M1233 702.300L1140 764M1128.500 775L1035.900 836.700" stroke="#98e8a0" stroke-width=".9"/>
<rect x="1129.500" y="764.500" width="10" height="10" fill="none" stroke="#fff" stroke-width="1.200"/>

<!-- UCS -->
<path d="M348.500 930L314 908.500" stroke="#c02830" stroke-width="4"/><path d="M348.500 930L314 908.500" stroke="#ffb4b4" stroke-width="1.200"/>
<path d="M348.500 930V894" stroke="#0b4ea2" stroke-width="5"/><circle cx="349" cy="894" r="2" fill="#8cd0ff"/>
<path d="M350 931L316 952.500" stroke="#168a1a" stroke-width="4.500"/>
<path d="M310 893l13 12M323 893l-13 12" stroke="#c8323c"/>
<path d="M347 877h13l-13 12.500h13" fill="none" stroke="#1f6ad4"/>
<path d="M312 937l6 5 6-5M318 942v6" fill="none" stroke="#26a52c"/>

<!-- view cube -->
<ellipse cx="1839" cy="308.300" rx="56" ry="37" fill="none" stroke="#454c59" stroke-width="14"/>
<ellipse cx="1840" cy="300" rx="36" ry="20" fill="#282f3a"/>
<text transform="translate(1876,262) rotate(25)" fill="#b0b4ba" font-size="15" font-weight="bold">S</text>
<text transform="translate(1798,280) rotate(-80)" fill="#b0b4ba" font-size="15" font-weight="bold">E</text>
<path d="M1837.300 242.300L1874.700 261.700 1840 282.300 1803.300 261.700z" fill="#a9aaaa"/>
<path d="M1803.300 261.700L1840 282.300V321.700L1806.700 300z" fill="#b6b7b7"/>
<path d="M1874.700 261.700L1840 282.300V321.700L1872.300 291.700z" fill="#adaeae"/>
<path d="M1803.300 261.700L1840 282.300 1874.700 261.700M1840 282.300V321.700" fill="none" stroke="#666" stroke-dasharray="4 3" stroke-width=".8"/>
<text transform="translate(1848,258) rotate(207)" fill="#4a4e55" font-size="10" font-style="italic">TOP</text>
<text transform="translate(1812,284) rotate(28)" fill="#4a4e55" font-size="10">BACK</text>
<text transform="translate(1851,300) rotate(-62)" fill="#4a4e55" font-size="10">LEFT</text>
<text transform="translate(1786,335) rotate(38)" fill="#b0b4ba" font-size="19" font-weight="bold">N</text>
<text transform="translate(1873,343) rotate(-38)" fill="#b0b4ba" font-size="19" font-weight="bold">M</text>
<rect x="1815.500" y="369" width="47" height="17" rx="3" fill="#7f8594"/>
<text x="1820" y="381.500" fill="#4f5563" font-size="11.500">WCS</text><path d="M1851 376h8l-4 4z" fill="#8f95a3"/>

<!-- nav bar -->
<rect x="1886" y="411" width="32" height="212" rx="3" fill="#565e6c"/>
<circle cx="1912" cy="416" r="3" fill="none" stroke="#454c5a"/><circle cx="1912" cy="617" r="3" fill="none" stroke="#454c5a"/>
<path d="M1890 440c0-8 5-12 12-12 4 0 7 3 7 8 0 8-5 13-13 13-4 0-6-4-6-9z" class="n"/><circle cx="1899" cy="441" r="4.500" class="n"/>
<text x="1902" y="454" fill="#3c4f68" font-size="9" font-weight="bold">2D</text>
<path d="M1899 460h6l-3 3z" fill="#454c5a"/>
<path d="M1890 484l5 5c2 3 6 6 10 6s8-3 8-8v-7c0-2-3-2-3 0v-3c0-2-3-2-3 0v-2c0-2-3-2-3 0v1c0-2-3-2-3 0v10l-4-4c-2-2-5 0-4 2z" class="n"/>
<path d="M1892 503l22 20M1910 503l-18 20" class="n"/><circle cx="1909" cy="516" r="5" fill="#565e6c" stroke="#454c5a" stroke-width="1.400"/><path d="M1912 520l4 4" class="n"/>
<path d="M1899 531h6l-3 3z" fill="#454c5a"/>
<path d="M1902 540l-5 6h3v18h4v-18h3z" class="n"/><ellipse cx="1902" cy="552" rx="11" ry="5" class="n"/>
<path d="M1899 569h6l-3 3z" fill="#454c5a"/>
<path d="M1890.500 581h5.500v6h-5.500zM1897.500 581h5.500v6h-5.500zM1904.500 581h5.500v6h-5.500z" class="n" stroke-width="1"/>
<rect x="1890.500" y="590" width="16" height="13" class="n" stroke-width="1"/><path d="M1895 593v7l7-3.500z" fill="#454c5a"/>

<!-- command line -->
<rect x="702" y="896" width="25" height="83" fill="#2c3440"/>
<path d="M706 900h16M706 902.500h16M706 905h16" stroke="#b8bcc2" stroke-dasharray="1.500 1" stroke-width="1"/>
<path d="M710 915l6 9M716 915l-6 9" stroke="#d0d2d5" stroke-width="1.800"/>
<path d="M707 949l6-8c-1-3 1-6 4-6l-1 3 2 1 2-2c0 3-3 6-6 5l-5 8z" fill="#c0c3c7"/>
<rect x="727" y="896" width="789" height="62" fill="#979898"/>
<rect x="727" y="959" width="789" height="20" fill="#bcbdbe"/>
<text x="729" y="908" class="c">Command:</text><text x="729" y="923" class="c">Command:</text><text x="729" y="938" class="c">Command:</text><text x="729" y="953" class="c">Command:</text>
<rect x="731.500" y="964" width="15" height="11" fill="#c4c5c6" stroke="#444c56"/><rect x="732" y="964" width="14" height="2" fill="#444c56"/><path d="M734 968l2 1.500-2 1.500M737 972h3" fill="none" stroke="#333" stroke-width=".8"/>
<path d="M749 967h7l-3.500 5z" fill="#555"/>
<text x="763.400" y="973" font-family="Liberation Mono,monospace" font-style="italic" font-size="11.600" fill="#55585c">Type a command</text>
<path d="M1505.500 971h7l-3.500-4z" fill="#555"/>

<!-- layout tabs -->
<path d="M8.500 1007.700L17 984h59.700L68 1007.700z" fill="#3b4453"/>
<text x="25.300" y="1001" fill="#e8eaec" font-weight="bold">Model</text>
<text x="85.300" y="1001" class="t">a3</text>
<path d="M106 1003l6-16M146 1003l6-16" stroke="#4f5662"/>
<path d="M129 990v13M122.500 996.500h13" stroke="#e8e8e8" stroke-width="1.800"/>

<!-- status bar -->
<g fill="#202630">
<rect x="1323.700" y="1014" width="3.300" height="24"/><rect x="1374" y="1014" width="3" height="24"/><rect x="1441.600" y="1014" width="3" height="24"/><rect x="1545" y="1014" width="4" height="24"/><rect x="1610" y="1014" width="4" height="24"/><rect x="1638" y="1014" width="3" height="24"/><rect x="1747" y="1014" width="3" height="24"/><rect x="1788" y="1014" width="2" height="24"/><rect x="1816" y="1014" width="2" height="24"/><rect x="1842" y="1014" width="3" height="24"/><rect x="1867" y="1014" width="2" height="24"/>
</g>
<rect x="1445" y="1015" width="22" height="22" fill="#5d8fca"/><rect x="1574" y="1015" width="22" height="22" fill="#5d8fca"/>
<text x="1331" y="1030" fill="#dcdee1" font-size="11.500">MODEL</text>
<path d="M1381 1021h15M1381 1025h15M1381 1029h15M1384 1018v15M1388.500 1018v15M1393 1018v15" stroke="#d8d8d8" stroke-width=".9"/>
<path d="M1407 1020h12M1407 1026h12M1407 1032h12" stroke="#d8d8d8" stroke-width="1.500" stroke-dasharray="1.500 4"/>
<use href="#trb" x="1433" y="1026"/>
<path d="M1448.500 1018v14.500h13" fill="none" stroke="#e8e8e8" stroke-width="1.300"/>
<circle cx="1479" cy="1026" r="6.500" fill="none" stroke="#bfc2c6"/><path d="M1479 1026l7-7M1479 1026h8" stroke="#bfc2c6"/>
<use href="#trb" x="1499.700" y="1026"/>
<path d="M1514 1019l12 15" stroke="#d04a50"/><path d="M1520 1018v16" stroke="#58c060"/>
<use href="#trb" x="1540" y="1026"/>
<path d="M1553 1032h15M1553 1032l12-12" stroke="#d0d2d6" fill="none"/>
<rect x="1578.500" y="1021" width="13" height="12.500" fill="none" stroke="#e8e8e8" stroke-width="1.200"/><rect x="1577" y="1018.500" width="4" height="4" fill="#5d8fca" stroke="#e8e8e8"/>
<use href="#trb" x="1604.500" y="1026"/>
<rect x="1618.500" y="1018.500" width="15" height="15" fill="#e0e0e0" stroke="#c8c8c8"/><path d="M1619 1019h3.500v3.500H1619zM1626 1019h3.500v3.500H1626zM1622.500 1022.500h3.500v3.500h-3.500zM1629.500 1022.500h3.500v3.500h-3.500zM1619 1026h3.500v3.500H1619zM1626 1026h3.500v3.500H1626zM1622.500 1029.500h3.500v3.500h-3.500zM1629.500 1029.500h3.500v3.500h-3.500z" fill="#2e3440"/>
<path d="M1652 1017l2 8 4 8-6-4-6 4 4-8z" fill="#d4d6d9"/><circle cx="1659" cy="1021" r="2.500" fill="none" stroke="#d4d6d9"/>
<path d="M1676 1018l2 7 4 8-6-4-6 4 4-8z" fill="#d4d6d9"/><path d="M1682 1018l1 3 3 .5-3 1-1 3-1-3-2-1 2-.5z" fill="#d4d6d9"/>
<path d="M1701 1018l2 7 4 8-6-4-6 4 4-8z" fill="#d4d6d9"/>
<text x="1718" y="1030" fill="#d4d6d9">1:1</text><use href="#trb" x="1739" y="1026"/>
<circle cx="1761" cy="1026" r="5.500" fill="none" stroke="#d8d8d8" stroke-width="3"/><path d="M1761 1017.500v3M1761 1031.500v3M1752.500 1026h3M1766.500 1026h3M1755 1020l2 2M1765 1030l2 2M1767 1020l-2 2M1757 1030l-2 2" stroke="#d8d8d8" stroke-width="2.200"/>
<use href="#trb" x="1781.600" y="1026"/>
<path d="M1803 1018v16M1795 1026h16" stroke="#e0e0e0" stroke-width="1.800"/>
<rect x="1823" y="1018" width="6" height="6" fill="none" stroke="#d0d2d6"/><circle cx="1834" cy="1025" r="3" fill="none" stroke="#d0d2d6"/><path d="M1825 1033l3-5 3 5z" fill="none" stroke="#d0d2d6"/>
<rect x="1850" y="1017" width="12" height="11" fill="#4c84b8"/><path d="M1855 1017v10M1850 1021h12" stroke="#e8e8e8"/><rect x="1848" y="1026" width="8" height="8" class="y"/><path d="M1856 1030l3 3 6-7" fill="none" stroke="#4fc060" stroke-width="2"/>
<rect x="1873.500" y="1020" width="15" height="12" fill="none" stroke="#d0d2d6"/><path d="M1876 1029l3-3M1876 1026v3h3M1886 1022.500l-3 3M1886 1025.500v-3h-3" fill="none" stroke="#d0d2d6" stroke-width=".9"/>
<path d="M1898 1019.500h16M1898 1026h16M1898 1032.500h16" stroke="#e0e0e0" stroke-width="1.800"/>
</svg>
</body></html>
